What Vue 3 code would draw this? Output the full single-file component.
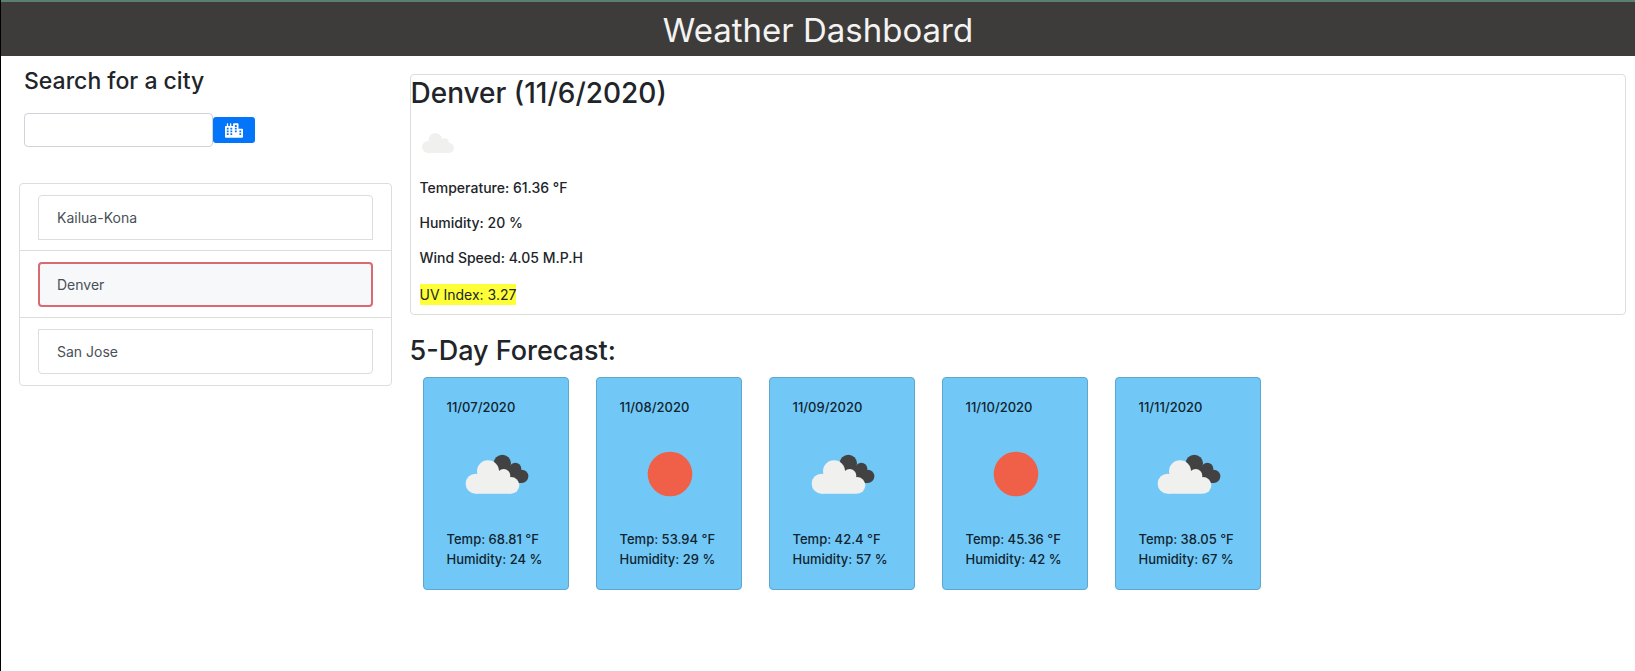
<script setup>
import { ref } from 'vue'

const query = ref('')
const cities = ['Kailua-Kona', 'Denver', 'San Jose']
const selected = ref('Denver')

const forecast = [
  { date: '11/07/2020', sky: 'clouds', temp: '68.81', humidity: 24 },
  { date: '11/08/2020', sky: 'clear', temp: '53.94', humidity: 29 },
  { date: '11/09/2020', sky: 'clouds', temp: '42.4', humidity: 57 },
  { date: '11/10/2020', sky: 'clear', temp: '45.36', humidity: 42 },
  { date: '11/11/2020', sky: 'clouds', temp: '38.05', humidity: 67 },
]
</script>

<template>
  <div class="page">
    <header class="banner">
      <h1>Weather Dashboard</h1>
    </header>
    <div class="columns">
      <aside class="sidebar">
        <form class="search" @submit.prevent>
          <label for="city">Search for a city</label>
          <div class="search-row">
            <input id="city" v-model="query" type="text" />
            <button type="submit" aria-label="Search">
              <svg class="city-icon" viewBox="0 0 640 512" aria-hidden="true">
                <path
                  fill="#fff"
                  fill-rule="evenodd"
                  d="M616 192H480V24c0-13-11-24-24-24H312c-13 0-24 11-24 24v72h-64V16c0-9-7-16-16-16h-16c-9 0-16 7-16 16v80h-64V16c0-9-7-16-16-16H80c-9 0-16 7-16 16v80H24c-13 0-24 11-24 24v360c0 18 14 32 32 32h576c18 0 32-14 32-32V216c0-13-11-24-24-24z
                  M64 160h64v64H64zM64 256h64v64H64zM64 352h64v64H64zM192 160h64v64h-64zM192 256h64v64h-64zM192 352h64v64h-64zM352 64h64v64h-64zM352 160h64v64h-64zM352 256h64v64h-64zM512 256h64v64h-64zM512 352h64v64h-64z"
                />
              </svg>
            </button>
          </div>
        </form>
        <ul class="cities">
          <li v-for="city in cities" :key="city">
            <button type="button" :class="{ active: city === selected }" @click="selected = city">
              {{ city }}
            </button>
          </li>
        </ul>
      </aside>

      <main class="content">
        <section class="current">
          <h2>Denver (11/6/2020)</h2>
          <svg class="current-icon" viewBox="0 0 161 101" aria-hidden="true">
            <g fill="#f0f0ef">
              <circle cx="30" cy="71" r="30" />
              <circle cx="67" cy="34" r="34" />
              <circle cx="114" cy="47" r="21" />
              <circle cx="136" cy="76" r="25" />
              <path d="M30 50H136V101H30zM60 30H112V60H60z" />
            </g>
          </svg>
          <p>Temperature: 61.36 °F</p>
          <p>Humidity: 20 %</p>
          <p>Wind Speed: 4.05 M.P.H</p>
          <p class="uv"><mark>UV Index: 3.27</mark></p>
        </section>

        <h2 class="forecast-title">5-Day Forecast:</h2>
        <section class="forecast">
          <article v-for="day in forecast" :key="day.date" class="day">
            <h3>{{ day.date }}</h3>
            <svg class="day-icon" viewBox="0 0 300 300" aria-hidden="true">
              <circle v-if="day.sky === 'clear'" cx="150" cy="150" r="67" fill="#f06048" />
              <g v-else transform="translate(56 92)">
                <g fill="#424243">
                  <circle cx="110" cy="26" r="26" />
                  <circle cx="149" cy="42" r="18" />
                  <circle cx="168" cy="65" r="20" />
                  <path d="M110 28L136 34L166 46L168 85H110z" />
                </g>
                <g fill="#f0f0ef">
                  <circle cx="30" cy="87" r="30" />
                  <circle cx="67" cy="50" r="33" />
                  <circle cx="114" cy="63" r="20" />
                  <circle cx="136" cy="92" r="25" />
                  <path d="M30 66H132V117H30zM60 46H98L112 60V72H60z" />
                </g>
              </g>
            </svg>
            <p>Temp: {{ day.temp }} °F</p>
            <p>Humidity: {{ day.humidity }} %</p>
          </article>
        </section>
      </main>
    </div>
  </div>
</template>

<style>
body {
  margin: 0;
  background: #fff;
}
</style>

<style scoped>
* {
  box-sizing: border-box;
}
.page {
  min-height: 100vh;
  border-left: 1px solid #000;
  font-family: Inter, "Liberation Sans", sans-serif;
  color: #212529;
}
h1, h2, h3, p, ul {
  margin: 0;
  padding: 0;
  font-weight: 500;
}
.banner {
  border-top: 2px solid #5b7f72;
  background: #3d3c3a;
  padding: 8px 0 6px;
  text-align: center;
}
.banner h1 {
  color: #f4f3f2;
  font-size: 33px;
  line-height: 40px;
  font-weight: 400;
}
.columns {
  display: grid;
  grid-template-columns: 1fr 3fr;
}
.sidebar {
  padding: 10px 18px 0;
}
.search {
  padding-left: 5px;
}
.search label {
  display: block;
  font-size: 23px;
  line-height: 30px;
  font-weight: 500;
}
.search-row {
  display: flex;
  align-items: center;
  margin-top: 17px;
}
.search input {
  width: 189px;
  height: 34px;
  border: 1px solid #ced4da;
  border-radius: 4px;
  padding: 0 12px;
  font: inherit;
  font-size: 14px;
}
.search button {
  display: flex;
  align-items: center;
  justify-content: center;
  width: 42px;
  height: 26px;
  padding: 0;
  border: 0;
  border-radius: 3px;
  background: #0275fb;
}
.city-icon {
  width: 18px;
  height: 15px;
}
.cities {
  margin-top: 36px;
  border: 1px solid #dcdddd;
  border-radius: 4px;
  list-style: none;
}
.cities li {
  padding: 11px 18px 10px;
}
.cities li:last-child {
  padding-bottom: 11px;
}
.cities li + li {
  border-top: 1px solid #dcdddd;
}
.cities button {
  display: block;
  width: 100%;
  height: 45px;
  padding: 0 18px;
  border: 1px solid #dcdddd;
  background: #fff;
  color: #495057;
  font: inherit;
  font-size: 14px;
  font-weight: 400;
  text-align: left;
}
.cities li:first-child button {
  border-radius: 4px 4px 0 0;
}
.cities li:last-child button {
  border-radius: 0 0 4px 4px;
}
.cities button.active {
  border: 2px solid #d86a74;
  border-radius: 4px;
  padding: 0 17px;
  background: #f7f8fa;
}
.content {
  padding: 18px 9px 0 0;
}
.current {
  border: 1px solid #dcdddd;
  border-radius: 4px;
  padding-bottom: 9px;
}
h2 {
  font-size: 28px;
  line-height: 36px;
}
.current-icon {
  display: block;
  width: 32px;
  height: 20px;
  margin: 22px 11px 25px;
}
.current p {
  padding-left: 9px;
  font-size: 14px;
  line-height: 20px;
  margin-bottom: 15px;
}
.current p.uv {
  margin: 16px 0 0;
  line-height: 21px;
}
.uv mark {
  display: inline-block;
  background: #ffff38;
  color: #212529;
  font-weight: 400;
}
.forecast-title {
  margin-top: 18px;
  font-size: 27px;
}
.forecast {
  display: flex;
  flex-wrap: wrap;
  gap: 27px;
  margin: 8px 0 0 13px;
}
.day {
  width: 146px;
  padding: 19px 23px 20px;
  border: 1px solid #5ea6cc;
  border-radius: 4px;
  background: #71c8f7;
  color: #10242f;
}
.day h3, .day p {
  font-size: 13px;
  line-height: 20px;
  white-space: nowrap;
}
.day-icon {
  display: block;
  width: 100px;
  height: 100px;
  margin: 7px 0 5px;
}
</style>
